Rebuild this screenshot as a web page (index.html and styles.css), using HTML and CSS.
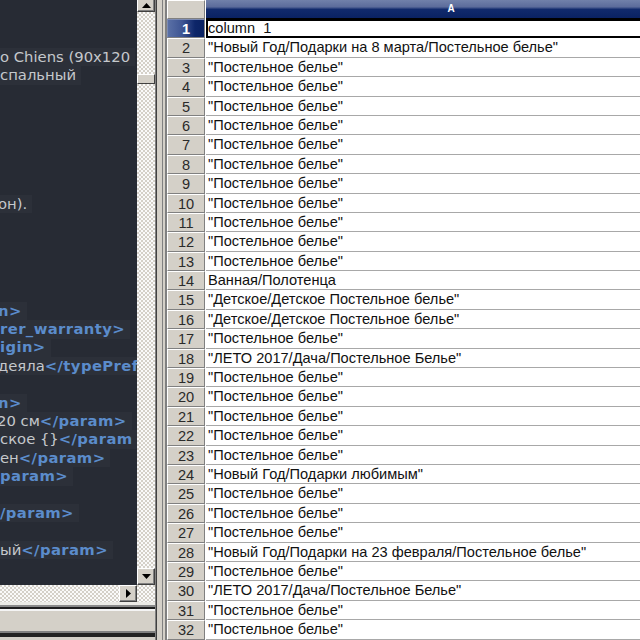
FILE: index.html
```html
<!DOCTYPE html>
<html>
<head>
<meta charset="utf-8">
<link rel="stylesheet" href="styles.css">
</head>
<body>
<div class="app">
  <div class="left">
    <div class="top">
      <div class="editor">
        <div class="block-a">
          <div class="ln"><span class="hl">o Chiens (90x120</span></div>
          <div class="ln"><span class="hl">спальный</span></div>
          <div class="ln"></div>
          <div class="ln"></div>
          <div class="ln"></div>
          <div class="ln"></div>
          <div class="ln"></div>
          <div class="ln"></div>
          <div class="ln cut"><span class="hl">он).</span></div>
        </div>
        <div class="block-b">
          <div class="ln cut"><span class="hl"><b class="tag">n&gt;</b></span></div>
          <div class="ln"><span class="hl"><b class="tag">rer_warranty&gt;</b></span></div>
          <div class="ln"><span class="hl"><b class="tag">igin&gt;</b></span></div>
          <div class="ln cut"><span class="hl">деяла<b class="tag">&lt;/typePref</b></span></div>
          <div class="ln"></div>
          <div class="ln cut"><span class="hl"><b class="tag">n&gt;</b></span></div>
          <div class="ln cut2"><span class="hl">20 см<b class="tag">&lt;/param&gt;</b></span></div>
          <div class="ln"><span class="hl">ское {}<b class="tag">&lt;/param</b></span></div>
          <div class="ln"><span class="hl">ен<b class="tag">&lt;/param&gt;</b></span></div>
          <div class="ln"><span class="hl"><b class="tag">param&gt;</b></span></div>
          <div class="ln"></div>
          <div class="ln"><span class="hl"><b class="tag">/param&gt;</b></span></div>
          <div class="ln"></div>
          <div class="ln"><span class="hl">ый<b class="tag">&lt;/param&gt;</b></span></div>
        </div>
      </div>
      <div class="vscroll">
        <div class="btn btn-up"><svg width="9" height="5" viewBox="0 0 9 5"><path d="M0 5 L4.5 0 L9 5 Z" fill="#000"/></svg></div>
        <div class="vtrack"><div class="thumb"></div></div>
        <div class="btn btn-down"><svg width="9" height="5" viewBox="0 0 9 5"><path d="M0 0 L9 0 L4.5 5 Z" fill="#000"/></svg></div>
      </div>
    </div>
    <div class="hscroll">
      <div class="htrack"></div>
      <div class="btn btn-right"><svg width="5" height="9" viewBox="0 0 5 9"><path d="M0 0 L5 4.5 L0 9 Z" fill="#000"/></svg></div>
      <div class="corner"></div>
    </div>
    <div class="status">
      <div class="s1"></div>
      <div class="s2"></div>
      <div class="s3"></div>
      <div class="s4"></div>
      <div class="s5"></div>
      <div class="s6"></div>
      <div class="s7"></div>
    </div>
  </div>
  <div class="divider">
    <div class="d1"></div><div class="d2"></div><div class="d3"></div><div class="d4"></div><div class="d5"></div><div class="d6"></div>
  </div>
  <div class="sheet">
    <div class="row head">
      <div class="num corner-cell"></div>
      <div class="colhead">A</div>
    </div>
    <div class="row">
      <div class="num sel">1</div>
      <div class="cell active">column  1</div>
    </div>
    <div class="row"><div class="num">2</div><div class="cell">"Новый Год/Подарки на 8 марта/Постельное белье"</div></div>
    <div class="row"><div class="num">3</div><div class="cell">"Постельное белье"</div></div>
    <div class="row"><div class="num">4</div><div class="cell">"Постельное белье"</div></div>
    <div class="row"><div class="num">5</div><div class="cell">"Постельное белье"</div></div>
    <div class="row"><div class="num">6</div><div class="cell">"Постельное белье"</div></div>
    <div class="row"><div class="num">7</div><div class="cell">"Постельное белье"</div></div>
    <div class="row"><div class="num">8</div><div class="cell">"Постельное белье"</div></div>
    <div class="row"><div class="num">9</div><div class="cell">"Постельное белье"</div></div>
    <div class="row"><div class="num">10</div><div class="cell">"Постельное белье"</div></div>
    <div class="row"><div class="num">11</div><div class="cell">"Постельное белье"</div></div>
    <div class="row"><div class="num">12</div><div class="cell">"Постельное белье"</div></div>
    <div class="row"><div class="num">13</div><div class="cell">"Постельное белье"</div></div>
    <div class="row"><div class="num">14</div><div class="cell">Ванная/Полотенца</div></div>
    <div class="row"><div class="num">15</div><div class="cell">"Детское/Детское Постельное белье"</div></div>
    <div class="row"><div class="num">16</div><div class="cell">"Детское/Детское Постельное белье"</div></div>
    <div class="row"><div class="num">17</div><div class="cell">"Постельное белье"</div></div>
    <div class="row"><div class="num">18</div><div class="cell">"ЛЕТО 2017/Дача/Постельное Белье"</div></div>
    <div class="row"><div class="num">19</div><div class="cell">"Постельное белье"</div></div>
    <div class="row"><div class="num">20</div><div class="cell">"Постельное белье"</div></div>
    <div class="row"><div class="num">21</div><div class="cell">"Постельное белье"</div></div>
    <div class="row"><div class="num">22</div><div class="cell">"Постельное белье"</div></div>
    <div class="row"><div class="num">23</div><div class="cell">"Постельное белье"</div></div>
    <div class="row"><div class="num">24</div><div class="cell">"Новый Год/Подарки любимым"</div></div>
    <div class="row"><div class="num">25</div><div class="cell">"Постельное белье"</div></div>
    <div class="row"><div class="num">26</div><div class="cell">"Постельное белье"</div></div>
    <div class="row"><div class="num">27</div><div class="cell">"Постельное белье"</div></div>
    <div class="row"><div class="num">28</div><div class="cell">"Новый Год/Подарки на 23 февраля/Постельное белье"</div></div>
    <div class="row"><div class="num">29</div><div class="cell">"Постельное белье"</div></div>
    <div class="row"><div class="num">30</div><div class="cell">"ЛЕТО 2017/Дача/Постельное Белье"</div></div>
    <div class="row"><div class="num">31</div><div class="cell">"Постельное белье"</div></div>
    <div class="row"><div class="num">32</div><div class="cell">"Постельное белье"</div></div>
  </div>
</div>
</body>
</html>
```

FILE: styles.css
```css
html, body {
  margin: 0;
  padding: 0;
  width: 640px;
  height: 640px;
  overflow: hidden;
  background: #d4d0c8;
}
.app {
  display: flex;
  width: 640px;
  height: 640px;
  overflow: hidden;
}
.left {
  width: 155px;
  flex-shrink: 0;
  display: flex;
  flex-direction: column;
}
.top {
  display: flex;
  height: 585px;
}
.editor {
  width: 137px;
  flex-shrink: 0;
  background: #272b34;
  overflow: hidden;
  font-family: "DejaVu Sans", sans-serif;
  font-size: 14.8px;
  color: #c5c8cc;
}
.block-a {
  padding-top: 47.8px;
}
.block-b {
  margin-top: 88.4px;
}
.ln {
  height: 18.4px;
  line-height: 18.4px;
  white-space: pre;
}
.ln.cut {
  margin-left: -2px;
}
.ln.cut2 {
  margin-left: -3px;
}
.hl {
  background: #2c3039;
  padding-right: 5px;
  display: inline-block;
}
.tag {
  color: #5b8ccb;
  font-weight: bold;
  letter-spacing: 0.4px;
}
.vscroll {
  width: 18px;
  display: flex;
  flex-direction: column;
}
.vtrack, .htrack, .corner {
  background-color: #d4d0c8;
  background-image: conic-gradient(#fafafa 25%, #d4d0c8 0 50%, #fafafa 0 75%, #d4d0c8 0);
  background-size: 4px 4px;
}
.btn {
  box-sizing: border-box;
  background: #d4d0c8;
  border-top: 1px solid #fff;
  border-left: 1px solid #fff;
  border-right: 1px solid #404040;
  border-bottom: 1px solid #404040;
  box-shadow: inset -1px -1px 0 #808080;
  display: flex;
  align-items: center;
  justify-content: center;
  flex-shrink: 0;
}
.btn-up {
  height: 17px;
  margin-top: -5px;
  padding-top: 4px;
}
.btn-down {
  height: 17px;
}
.vtrack {
  flex: 1;
  position: relative;
}
.thumb {
  position: absolute;
  top: 62px;
  left: 0;
  right: 0;
  height: 10px;
  box-sizing: border-box;
  background: #d4d0c8;
  border-top: 1px solid #fff;
  border-left: 1px solid #fff;
  border-right: 1px solid #404040;
  border-bottom: 1px solid #404040;
}
.hscroll {
  height: 17px;
  display: flex;
}
.htrack {
  flex: 1;
}
.btn-right {
  width: 18px;
  height: 17px;
}
.corner {
  width: 18px;
}
.status {
  flex: 1;
  display: flex;
  flex-direction: column;
}
.s1 { height: 3px; background: #ecebe6; }
.s2 { height: 2px; background: #8a8a8a; }
.s3 { height: 2px; background: #1e1e1e; }
.s4 { height: 2px; background: #f4f4f4; }
.s5 { height: 20px; background: #d4d0c8; }
.s6 { height: 2px; background: #808080; }
.s7 { flex: 1; background: #222; border-bottom: 3px solid #d4d0c8; }
.divider {
  width: 12px;
  flex-shrink: 0;
  display: flex;
}
.d1 { width: 1px; background: #808080; }
.d2 { width: 1px; background: #404040; }
.d3 { width: 5px; background: #d4d0c8; }
.d4 { width: 1px; background: #808080; }
.d5 { width: 2px; background: #d4d0c8; }
.d6 { width: 2px; background: #808080; }
.sheet {
  flex: 1;
  overflow: hidden;
  background: #fff;
  font-family: "Liberation Sans", Arial, sans-serif;
  font-size: 14.6px;
}
.row {
  display: flex;
  height: 19.4px;
}
.row.head {
  height: 19px;
}
.num {
  width: 38px;
  flex-shrink: 0;
  box-sizing: border-box;
  background: #d4d0c8;
  border-top: 1px solid #fff;
  border-left: 1px solid #fff;
  border-right: 1px solid #808080;
  border-bottom: 1px solid #808080;
  text-align: center;
  color: #2a2a2a;
  line-height: 18px;
}
.corner-cell {
  border-bottom: 1px solid #808080;
}
.num.sel {
  background: linear-gradient(to right, #5a70a6 0%, #3e5593 40%, #0d2669 75%, #0a2262 100%);
  color: #fff;
  font-weight: bold;
  border-top-color: #7d8cb4;
  border-left-color: #7d8cb4;
}
.colhead {
  width: 490px;
  flex-shrink: 0;
  box-sizing: border-box;
  margin-left: 1px;
  background: linear-gradient(#7181aa 0%, #5c6c9b 38%, #112a6c 52%, #0a2262 100%);
  color: #fff;
  font-weight: bold;
  font-size: 10px;
  text-align: center;
  line-height: 17px;
  border-bottom: 1px solid #000;
}
.cell {
  flex: 1;
  min-width: 480px;
  box-sizing: border-box;
  margin-left: 1px;
  padding-left: 2px;
  border-bottom: 1px solid #a8a8a8;
  white-space: pre;
  color: #111;
  line-height: 18px;
}
.cell.active {
  border: 2px solid #000;
  border-right: none;
  padding-left: 0;
  line-height: 15px;
}
```
